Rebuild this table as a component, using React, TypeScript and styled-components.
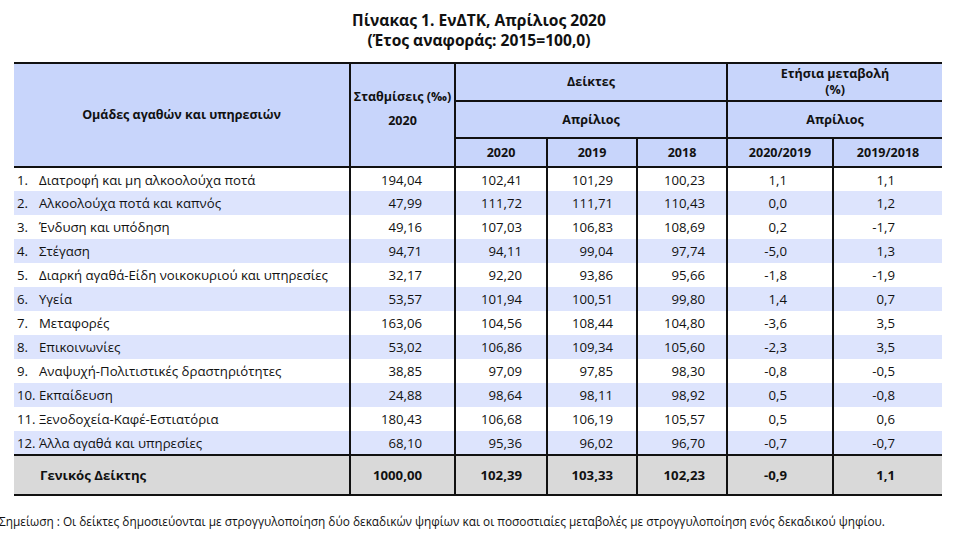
import styled, { createGlobalStyle } from "styled-components";

const GlobalStyle = createGlobalStyle`
  html, body {
    margin: 0;
    padding: 0;
    background: #ffffff;
  }
  body {
    font-family: "Open Sans", "Noto Sans", sans-serif;
    color: #111111;
  }
`;

type Row = {
  num: string;
  label: string;
  weight: string;
  values: string[];
};

const rows: Row[] = [
  { num: "1.", label: "Διατροφή και μη αλκοολούχα ποτά", weight: "194,04", values: ["102,41", "101,29", "100,23", "1,1", "1,1"] },
  { num: "2.", label: "Αλκοολούχα ποτά και καπνός", weight: "47,99", values: ["111,72", "111,71", "110,43", "0,0", "1,2"] },
  { num: "3.", label: "Ένδυση και υπόδηση", weight: "49,16", values: ["107,03", "106,83", "108,69", "0,2", "-1,7"] },
  { num: "4.", label: "Στέγαση", weight: "94,71", values: ["94,11", "99,04", "97,74", "-5,0", "1,3"] },
  { num: "5.", label: "Διαρκή αγαθά-Είδη νοικοκυριού και υπηρεσίες", weight: "32,17", values: ["92,20", "93,86", "95,66", "-1,8", "-1,9"] },
  { num: "6.", label: "Υγεία", weight: "53,57", values: ["101,94", "100,51", "99,80", "1,4", "0,7"] },
  { num: "7.", label: "Μεταφορές", weight: "163,06", values: ["104,56", "108,44", "104,80", "-3,6", "3,5"] },
  { num: "8.", label: "Επικοινωνίες", weight: "53,02", values: ["106,86", "109,34", "105,60", "-2,3", "3,5"] },
  { num: "9.", label: "Αναψυχή-Πολιτιστικές δραστηριότητες", weight: "38,85", values: ["97,09", "97,85", "98,30", "-0,8", "-0,5"] },
  { num: "10.", label: "Εκπαίδευση", weight: "24,88", values: ["98,64", "98,11", "98,92", "0,5", "-0,8"] },
  { num: "11.", label: "Ξενοδοχεία-Καφέ-Εστιατόρια", weight: "180,43", values: ["106,68", "106,19", "105,57", "0,5", "0,6"] },
  { num: "12.", label: "Άλλα αγαθά και υπηρεσίες", weight: "68,10", values: ["95,36", "96,02", "96,70", "-0,7", "-0,7"] },
];

const total = { weight: "1000,00", values: ["102,39", "103,33", "102,23", "-0,9", "1,1"] };

// right padding for each numeric column (weight, 3 indices, 2 changes)
const pads = [32, 24, 23, 21, 45, 47];

export default function App() {
  return (
    <>
      <GlobalStyle />
      <Page>
        <Title>
          <div>Πίνακας 1. ΕνΔΤΚ, Απρίλιος 2020</div>
          <div>(Έτος αναφοράς: 2015=100,0)</div>
        </Title>
        <Table>
          <colgroup>
            <col style={{ width: 336 }} />
            <col style={{ width: 105 }} />
            <col style={{ width: 92 }} />
            <col style={{ width: 90 }} />
            <col style={{ width: 90 }} />
            <col style={{ width: 106 }} />
            <col style={{ width: 109 }} />
          </colgroup>
          <thead>
            <HeadRow height={38}>
              <HeadCell rowSpan={3} $left>
                Ομάδες αγαθών και υπηρεσιών
              </HeadCell>
              <WeightHead rowSpan={3}>
                Σταθμίσεις (‰)
                <br />
                <span>2020</span>
              </WeightHead>
              <HeadCell colSpan={3}>Δείκτες</HeadCell>
              <HeadCell colSpan={2} $last $tight>
                Ετήσια μεταβολή
                <br />
                (%)
              </HeadCell>
            </HeadRow>
            <HeadRow height={37}>
              <HeadCell colSpan={3}>Απρίλιος</HeadCell>
              <HeadCell colSpan={2} $last>
                Απρίλιος
              </HeadCell>
            </HeadRow>
            <HeadRow height={29}>
              <HeadCell>2020</HeadCell>
              <HeadCell>2019</HeadCell>
              <HeadCell $grey>2018</HeadCell>
              <HeadCell>2020/2019</HeadCell>
              <HeadCell $last>2019/2018</HeadCell>
            </HeadRow>
          </thead>
          <tbody>
            {rows.map((r, i) => (
              <BodyRow key={r.num} $shaded={i % 2 === 1}>
                <LabelCell>
                  <Num>{r.num}</Num>
                  {r.label}
                </LabelCell>
                <NumCell $pad={pads[0]}>{r.weight}</NumCell>
                {r.values.map((v, j) => (
                  <NumCell key={j} $pad={pads[j + 1]} $grey={j === 2} $last={j === 4}>
                    {v}
                  </NumCell>
                ))}
              </BodyRow>
            ))}
            <TotalRow>
              <TotalLabel>Γενικός Δείκτης</TotalLabel>
              <NumCell $pad={pads[0]}>{total.weight}</NumCell>
              {total.values.map((v, j) => (
                <NumCell key={j} $pad={pads[j + 1]} $grey={j === 2} $last={j === 4}>
                  {v}
                </NumCell>
              ))}
            </TotalRow>
          </tbody>
        </Table>
        <Note>
          Σημείωση : Οι δείκτες δημοσιεύονται με στρογγυλοποίηση δύο δεκαδικών ψηφίων και οι
          ποσοστιαίες μεταβολές με στρογγυλοποίηση ενός δεκαδικού ψηφίου.
        </Note>
      </Page>
    </>
  );
}

const Page = styled.div`
  width: 958px;
  height: 537px;
  overflow: hidden;
  padding-top: 10px;
  box-sizing: border-box;
`;

const Title = styled.div`
  text-align: center;
  font-weight: 700;
  font-size: 15.6px;
  line-height: 20px;
  margin-bottom: 12px;
`;

const Table = styled.table`
  margin-left: 14px;
  width: 928px;
  table-layout: fixed;
  border-collapse: collapse;
  font-size: 13.2px;
  border-top: 2px solid #111;
`;

const HeadRow = styled.tr<{ height: number }>`
  height: ${(p) => p.height}px;
`;

const HeadCell = styled.th<{ $left?: boolean; $last?: boolean; $grey?: boolean; $tight?: boolean }>`
  background: #c8d5fb;
  font-size: 12.5px;
  font-weight: 700;
  text-align: center;
  vertical-align: middle;
  padding: 0;
  line-height: ${(p) => (p.$tight ? "16px" : "18px")};
  border-left: ${(p) => (p.$left ? "none" : p.$grey ? "2px solid #4a4a4a" : "2px solid #111")};
  border-right: ${(p) => (p.$last || p.$left ? "none" : "2px solid #111")};
  border-bottom: 2px solid #111;
`;

const WeightHead = styled.th`
  background: #c8d5fb;
  font-size: 12.5px;
  font-weight: 700;
  text-align: center;
  vertical-align: middle;
  padding: 0 0 12px;
  line-height: 24px;
  border-left: 2px solid #111;
  border-right: 2px solid #111;
  border-bottom: 2px solid #111;
`;

const BodyRow = styled.tr<{ $shaded: boolean }>`
  height: 24px;
  background: ${(p) => (p.$shaded ? "#dde4fd" : "#ffffff")};
`;

const LabelCell = styled.td`
  padding: 0 0 0 3px;
  white-space: nowrap;
  vertical-align: middle;
`;

const Num = styled.span`
  display: inline-block;
  min-width: 20px;
  margin-right: 2px;
`;

const NumCell = styled.td<{ $pad: number; $grey?: boolean; $last?: boolean }>`
  text-align: right;
  padding: 0 ${(p) => p.$pad}px 0 0;
  vertical-align: middle;
  border-left: 2px solid ${(p) => (p.$grey ? "#4a4a4a" : "#111")};
  border-right: ${(p) => (p.$last ? "none" : "2px solid #111")};
`;

const TotalRow = styled.tr`
  height: 40px;
  background: #d9d9d9;
  font-weight: 700;
  border-top: 2px solid #111;
  border-bottom: 2px solid #111;
`;

const TotalLabel = styled.td`
  padding: 0 0 0 26px;
  vertical-align: middle;
`;

const Note = styled.div`
  margin: 17px 0 0 -1px;
  font-size: 11.85px;
  white-space: nowrap;
`;
